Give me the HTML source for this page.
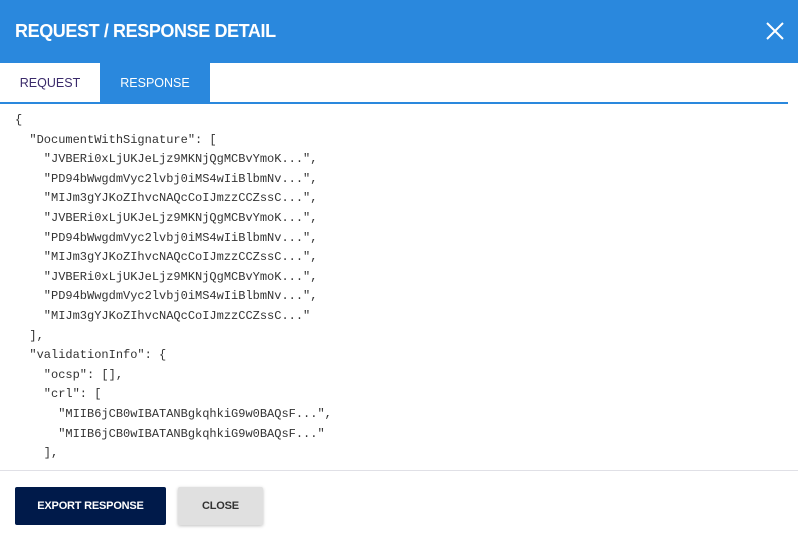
<!DOCTYPE html>
<html><head><style>
*{margin:0;padding:0;box-sizing:border-box}
body{width:798px;height:539px;background:#fff;font-family:"Liberation Sans",sans-serif;position:relative;overflow:hidden}
.hdr{position:absolute;left:0;top:0;width:798px;height:63px;background:#2a88dd;color:#fff;font-size:18px;font-weight:bold;padding:21px 0 0 15px;letter-spacing:-0.4px}
.x{position:absolute;right:14px;top:22px}
.tabs{position:absolute;top:63px;left:0;width:798px;height:40px}
.tab{position:absolute;top:0;height:40px;line-height:40px;font-size:12.5px;text-align:center}
.line{position:absolute;top:102px;left:0;width:788px;height:2px;background:#2a88dd}
pre{position:absolute;left:15px;top:111px;font-family:"Liberation Mono",monospace;font-size:12px;line-height:19.6px;color:#333}
.div{position:absolute;top:470px;left:0;width:798px;height:1px;background:#e0e0e6}
.btn{position:absolute;top:487px;height:38px;line-height:38px;font-size:11px;font-weight:bold;letter-spacing:-0.2px;text-align:center;border-radius:2px}
</style></head><body>
<div class="hdr">REQUEST / RESPONSE DETAIL</div>
<svg class="x" width="18" height="18" viewBox="0 0 18 18"><path d="M1 1L17 17M17 1L1 17" stroke="#fff" stroke-width="2"/></svg>
<div class="tabs">
<div class="tab" style="left:0;width:100px;color:#3a2a6a">REQUEST</div>
<div class="tab" style="left:100px;width:110px;background:#2a88dd;color:#fff">RESPONSE</div>
</div>
<div class="line"></div>
<pre>{
  "DocumentWithSignature": [
    "JVBERi0xLjUKJeLjz9MKNjQgMCBvYmoK...",
    "PD94bWwgdmVyc2lvbj0iMS4wIiBlbmNv...",
    "MIJm3gYJKoZIhvcNAQcCoIJmzzCCZssC...",
    "JVBERi0xLjUKJeLjz9MKNjQgMCBvYmoK...",
    "PD94bWwgdmVyc2lvbj0iMS4wIiBlbmNv...",
    "MIJm3gYJKoZIhvcNAQcCoIJmzzCCZssC...",
    "JVBERi0xLjUKJeLjz9MKNjQgMCBvYmoK...",
    "PD94bWwgdmVyc2lvbj0iMS4wIiBlbmNv...",
    "MIJm3gYJKoZIhvcNAQcCoIJmzzCCZssC..."
  ],
  "validationInfo": {
    "ocsp": [],
    "crl": [
      "MIIB6jCB0wIBATANBgkqhkiG9w0BAQsF...",
      "MIIB6jCB0wIBATANBgkqhkiG9w0BAQsF..."
    ],
</pre>
<div class="div"></div>
<div class="btn" style="left:15px;width:151px;background:#001a4a;color:#fff">EXPORT RESPONSE</div>
<div class="btn" style="left:178px;width:85px;background:#e0e0e0;color:#333;box-shadow:0 1px 3px rgba(0,0,0,.25)">CLOSE</div>
</body></html>
